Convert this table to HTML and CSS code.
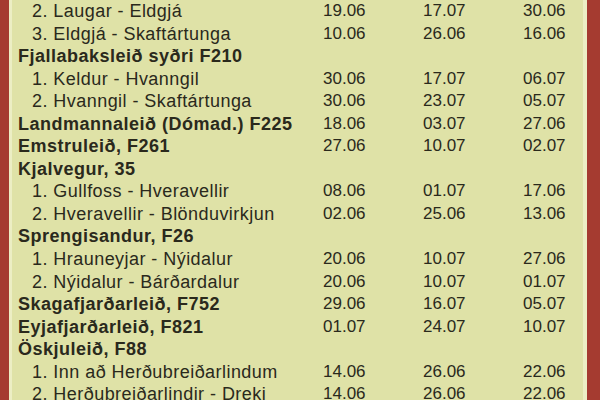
FILE: index.html
```html
<!DOCTYPE html>
<html lang="is">
<head>
<meta charset="utf-8">
<title>Hálendisvegir</title>
<link rel="stylesheet" href="styles.css">
</head>
<body>
<div class="frame">
  <div class="sheet">
    <div class="row sub"><span class="name">2. Laugar - Eldgjá</span><span class="d">19.06</span><span class="d">17.07</span><span class="d">30.06</span></div>
    <div class="row sub"><span class="name">3. Eldgjá - Skaftártunga</span><span class="d">10.06</span><span class="d">26.06</span><span class="d">16.06</span></div>
    <div class="row head"><span class="name">Fjallabaksleið syðri F210</span></div>
    <div class="row sub"><span class="name">1. Keldur - Hvanngil</span><span class="d">30.06</span><span class="d">17.07</span><span class="d">06.07</span></div>
    <div class="row sub"><span class="name">2. Hvanngil - Skaftártunga</span><span class="d">30.06</span><span class="d">23.07</span><span class="d">05.07</span></div>
    <div class="row head"><span class="name">Landmannaleið (Dómad.) F225</span><span class="d">18.06</span><span class="d">03.07</span><span class="d">27.06</span></div>
    <div class="row head"><span class="name">Emstruleið, F261</span><span class="d">27.06</span><span class="d">10.07</span><span class="d">02.07</span></div>
    <div class="row head"><span class="name">Kjalvegur, 35</span></div>
    <div class="row sub"><span class="name">1. Gullfoss - Hveravellir</span><span class="d">08.06</span><span class="d">01.07</span><span class="d">17.06</span></div>
    <div class="row sub"><span class="name">2. Hveravellir - Blönduvirkjun</span><span class="d">02.06</span><span class="d">25.06</span><span class="d">13.06</span></div>
    <div class="row head"><span class="name">Sprengisandur, F26</span></div>
    <div class="row sub"><span class="name">1. Hrauneyjar - Nýidalur</span><span class="d">20.06</span><span class="d">10.07</span><span class="d">27.06</span></div>
    <div class="row sub"><span class="name">2. Nýidalur - Bárðardalur</span><span class="d">20.06</span><span class="d">10.07</span><span class="d">01.07</span></div>
    <div class="row head"><span class="name">Skagafjarðarleið, F752</span><span class="d">29.06</span><span class="d">16.07</span><span class="d">05.07</span></div>
    <div class="row head"><span class="name">Eyjafjarðarleið, F821</span><span class="d">01.07</span><span class="d">24.07</span><span class="d">10.07</span></div>
    <div class="row head"><span class="name">Öskjuleið, F88</span></div>
    <div class="row sub"><span class="name">1. Inn að Herðubreiðarlindum</span><span class="d">14.06</span><span class="d">26.06</span><span class="d">22.06</span></div>
    <div class="row sub"><span class="name">2. Herðubreiðarlindir - Dreki</span><span class="d">14.06</span><span class="d">26.06</span><span class="d">22.06</span></div>
  </div>
</div>
</body>
</html>
```
FILE: styles.css
```css
html, body {
  margin: 0;
  padding: 0;
  height: 100%;
  overflow: hidden;
}
body {
  background: #dfe2a7;
  font-family: "Liberation Sans", Arial, sans-serif;
  color: #2a291c;
}
.frame {
  height: 400px;
  border-left: 9px solid #a53b30;
  border-right: 13px solid #a53b30;
  background: #dfe2a7;
}
.sheet {
  height: 100%;
  border-left: 3px solid #eceec4;
  border-right: 4px solid #eceec4;
  padding-left: 6px;
}
.row {
  display: grid;
  grid-template-columns: 305px 100px 100px 100px;
  height: 22.55px;
  line-height: 22.55px;
  font-size: 18px;
  white-space: nowrap;
}
.name {
  letter-spacing: 0.45px;
}
.sub .name {
  padding-left: 14px;
}
.head .name {
  font-weight: bold;
  letter-spacing: 0.5px;
}
.d {
  font-size: 17px;
  letter-spacing: 0;
}
```
